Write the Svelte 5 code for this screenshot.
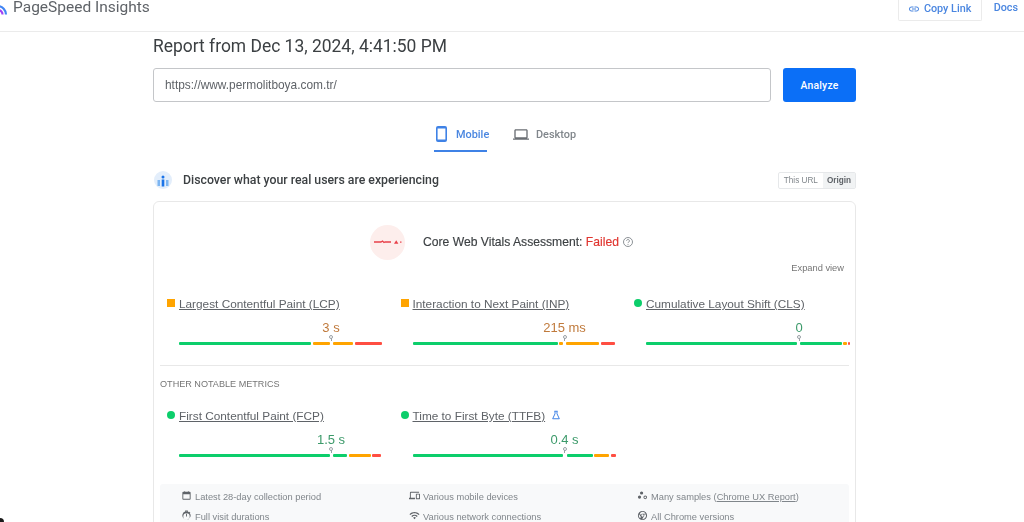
<script>
	const coreMetrics = [
		{
			name: 'Largest Contentful Paint (LCP)', value: '3 s', status: 'average', pin: 152,
			segments: [['good', 132], ['average', 17], ['gap', 3.5], ['average', 20], ['poor', 27]]
		},
		{
			name: 'Interaction to Next Paint (INP)', value: '215 ms', status: 'average', pin: 152,
			segments: [['good', 145], ['average', 3.5], ['gap', 3.5], ['average', 33], ['poor', 14.5]]
		},
		{
			name: 'Cumulative Layout Shift (CLS)', value: '0', status: 'good', pin: 153,
			segments: [['good', 150.5], ['gap', 3.5], ['good', 41.5], ['average', 3.5], ['poor', 2]]
		}
	];

	const otherMetrics = [
		{
			name: 'First Contentful Paint (FCP)', value: '1.5 s', status: 'good', pin: 152,
			segments: [['good', 150.5], ['gap', 3.5], ['good', 14], ['average', 22], ['poor', 9]]
		},
		{
			name: 'Time to First Byte (TTFB)', value: '0.4 s', status: 'good', pin: 152, beta: true,
			segments: [['good', 150], ['gap', 4], ['good', 26], ['average', 15], ['poor', 5]]
		}
	];

	const icons = {
		calendar: 'M5 4h2V2.5h2V4h6V2.5h2V4h2a2 2 0 0 1 2 2v13a2 2 0 0 1-2 2H5a2 2 0 0 1-2-2V6a2 2 0 0 1 2-2zm0 5v10h14V9H5z',
		timer: 'M9 1h6v2H9V1zm2 7h2v6h-2V8zm8-1.6 1.4-1.4L19 3.6l-1.4 1.4A9 9 0 1 0 19 6.4zM12 21a7 7 0 1 1 0-14 7 7 0 0 1 0 14z',
		devices: 'M4 6h18V4H4a2 2 0 0 0-2 2v11H0v3h13v-3H4V6zm19 2h-7a1 1 0 0 0-1 1v10a1 1 0 0 0 1 1h7a1 1 0 0 0 1-1V9a1 1 0 0 0-1-1zm-1 10h-5v-8h5v8z',
		wifi: 'M1 9l2 2c5-5 13-5 18 0l2-2C16.900 3 7.100 3 1 9zm8 8 3 3 3-3a4.200 4.200 0 0 0-6 0zm-4-4 2 2a7 7 0 0 1 10 0l2-2a10 10 0 0 0-14 0z',
		samples: 'M10 3a3.500 3.500 0 1 1 0 7 3.500 3.500 0 0 1 0-7zM5.500 12a3.500 3.500 0 1 1 0 7 3.500 3.500 0 0 1 0-7zM18 12a4 4 0 1 1 0 8 4 4 0 0 1 0-8zm0 2a2 2 0 1 0 0 4 2 2 0 0 0 0-4z',
		chrome: 'M12 2a10 10 0 1 0 0 20 10 10 0 0 0 0-20zm0 2a8 8 0 0 1 6.900 4H12a4 4 0 0 0-3.800 2.800L6.300 7A8 8 0 0 1 12 4zM4 12c0-1 .2-2 .6-2.900L8.500 15.500l-1.800 2.500A8 8 0 0 1 4 12zm8 2.500a2.500 2.500 0 1 1 0-5 2.500 2.500 0 0 1 0 5zm0 5.500h-.6l3-5.400A4 4 0 0 0 16 12c0-.7-.2-1.400-.5-2h4A8 8 0 0 1 12 20z'
	};

	const notes = [
		[
			{ icon: 'calendar', text: 'Latest 28-day collection period' },
			{ icon: 'devices', text: 'Various mobile devices' },
			{ icon: 'samples', text: 'Many samples (', link: 'Chrome UX Report', after: ')' }
		],
		[
			{ icon: 'timer', text: 'Full visit durations' },
			{ icon: 'wifi', text: 'Various network connections' },
			{ icon: 'chrome', text: 'All Chrome versions' }
		]
	];
</script>

{#snippet metric(m)}
	<div class="metric">
		<div class="metric-head">
			<span class="marker {m.status}"></span>
			<a class="metric-name" href="#top">{m.name}</a>
			{#if m.beta}
				<svg class="flask" viewBox="0 0 12 12"><path d="M4 1.500h4M4.800 1.500v3L2 10.500h8l-2.800-6v-3" /></svg>
			{/if}
		</div>
		<div class="metric-value {m.status}"><span style="margin-left: {m.pin}px">{m.value}</span></div>
		<div class="bar">
			{#each m.segments as [kind, width]}
				<span class="seg {kind}" style="width: {width}px"></span>
			{/each}
			<span class="pin" style="left: {m.pin}px"></span>
		</div>
	</div>
{/snippet}

<div class="page">
	<header>
		<div class="brand">
			<svg class="logo" viewBox="0 0 13 16">
				<path d="M-2 6a8.500 8.500 0 0 1 8 8.500" fill="none" stroke="#4285f4" stroke-width="2.200" />
				<path d="M-2 10a4.500 4.500 0 0 1 4.500 4.500" fill="none" stroke="#a142f4" stroke-width="2.200" />
			</svg>
			<span>PageSpeed Insights</span>
		</div>
		<div class="header-actions">
			<button class="copy">
				<svg viewBox="0 0 24 24"><path d="M3.900 12c0-1.710 1.390-3.100 3.100-3.100h4V7H7c-2.760 0-5 2.240-5 5s2.240 5 5 5h4v-1.900H7c-1.710 0-3.100-1.390-3.100-3.100zM8 13h8v-2H8v2zm9-6h-4v1.900h4c1.710 0 3.100 1.390 3.100 3.100s-1.390 3.100-3.100 3.100h-4V17h4c2.760 0 5-2.240 5-5s-2.240-5-5-5z" /></svg>
				Copy Link
			</button>
			<a class="docs" href="#top">Docs</a>
		</div>
	</header>

	<main>
		<h1>Report from Dec 13, 2024, 4:41:50 PM</h1>

		<form class="url-form">
			<input type="text" value="https://www.permolitboya.com.tr/" />
			<button type="button">Analyze</button>
		</form>

		<div class="tabs">
			<div class="tab active">
				<svg class="phone" viewBox="0 0 11 16"><path d="M2 0h7a2 2 0 0 1 2 2v12a2 2 0 0 1-2 2H2a2 2 0 0 1-2-2V2a2 2 0 0 1 2-2zm-.4 2.500v11h7.800v-11H1.600z" /></svg>
				Mobile
			</div>
			<div class="tab">
				<svg class="laptop" viewBox="0 0 24 18"><path d="M20 15c1.100 0 2-.9 2-2V3c0-1.100-.9-2-2-2H4c-1.100 0-2 .9-2 2v10c0 1.100.9 2 2 2H0v2h24v-2h-4zM4 3h16v10H4V3z" /></svg>
				Desktop
			</div>
		</div>

		<div class="field-head">
			<svg class="field-icon" viewBox="0 0 18 18">
				<circle cx="9" cy="9" r="9" fill="#e3eefb" />
				<circle cx="9" cy="6" r="1.500" fill="#1a73e8" />
				<rect x="3.500" y="9" width="2.500" height="6" fill="#7cb5f2" />
				<rect x="7.700" y="8.500" width="2.600" height="7" fill="#1a73e8" />
				<rect x="12" y="9" width="2.500" height="6" fill="#7cb5f2" />
			</svg>
			<h2>Discover what your real users are experiencing</h2>
			<div class="toggle">
				<span>This URL</span>
				<span class="on">Origin</span>
			</div>
		</div>

		<section class="card">
			<div class="assessment">
				<div class="thumb">
					<svg viewBox="0 0 30 6">
						<path d="M1 3h7l1.500-1 1.500 1.500 1-.5h6" fill="none" stroke="#e8404a" stroke-width="1.300" />
						<path d="M21 4.800l2.200-3.600 2.200 3.600z" fill="#e8404a" />
						<rect x="27" y="2.500" width="1.500" height="1.200" fill="#e8404a" />
					</svg>
				</div>
				<p>Core Web Vitals Assessment: <b>Failed</b></p>
				<svg class="help" viewBox="0 0 12 12"><circle cx="6" cy="6" r="4.500" /><path d="M4.600 4.800a1.400 1.400 0 1 1 2.200 1.200c-.5.300-.8.600-.8 1.100M6 8.200v.8" /></svg>
			</div>
			<div class="expand">Expand view</div>

			<div class="metrics">
				{#each coreMetrics as m}
					{@render metric(m)}
				{/each}
			</div>

			<div class="other">
				<h3>OTHER NOTABLE METRICS</h3>
				<div class="metrics">
					{#each otherMetrics as m}
						{@render metric(m)}
					{/each}
				</div>
			</div>

			<div class="notes">
				{#each notes as row}
					{#each row as note}
						<div class="note">
							<svg viewBox="0 0 24 24"><path d={icons[note.icon]} /></svg>
							<span>{note.text}{#if note.link}<a href="#top">{note.link}</a>{note.after}{/if}</span>
						</div>
					{/each}
				{/each}
			</div>
		</section>
	</main>

	<span class="corner"></span>
</div>

<style>
	:global(body) {
		background: #fff;
		overflow: hidden;
	}

	.page {
		position: relative;
		height: 522px;
		overflow: hidden;
		font-family: "Liberation Sans", Arial, sans-serif;
		color: #3c4043;
		filter: blur(0.5px);
	}

	.corner {
		position: absolute;
		left: -4px;
		bottom: -4px;
		width: 8px;
		height: 8px;
		border-radius: 50%;
		background: #1a1a1a;
	}

	header {
		height: 31px;
		border-bottom: 1px solid #ebebeb;
		display: flex;
		justify-content: space-between;
		align-items: flex-start;
	}

	.brand {
		display: flex;
		align-items: flex-start;
		font-family: Roboto, sans-serif;
		font-size: 15.500px;
		line-height: 14px;
		color: #5f6368;
	}

	.logo {
		width: 13px;
		height: 16px;
	}

	.header-actions {
		display: flex;
		align-items: flex-start;
		margin-right: 6px;
	}

	.copy {
		width: 84px;
		height: 21px;
		padding: 0 0 3px;
		border: 1px solid #ebebeb;
		border-top: none;
		border-radius: 0 0 2px 2px;
		background: #fff;
		color: #4a86e0;
		font-family: Roboto, sans-serif;
		font-size: 10.800px;
		font-weight: 500;
		display: flex;
		align-items: center;
		justify-content: center;
		gap: 4px;
	}

	.copy svg {
		width: 12px;
		height: 12px;
		fill: #4a86e0;
	}

	.docs {
		margin: 2px 0 0 12px;
		color: #4a86e0;
		font-family: Roboto, sans-serif;
		font-size: 10.800px;
		font-weight: 500;
		line-height: 12px;
		text-decoration: none;
	}

	main {
		width: 703px;
		margin-left: 153px;
	}

	h1 {
		margin: 4px 0 0;
		font-family: Roboto, sans-serif;
		font-size: 17.450px;
		font-weight: 400;
		line-height: 20px;
		color: #3c4043;
	}

	.url-form {
		display: flex;
		gap: 12px;
		margin-top: 12px;
		height: 34px;
	}

	.url-form input {
		flex: 1;
		min-width: 0;
		box-sizing: border-box;
		padding: 0 11px;
		border: 1px solid #c4c6c9;
		border-radius: 3px;
		font-family: "Liberation Sans", Arial, sans-serif;
		font-size: 11.900px;
		color: #5f6368;
		outline: none;
	}

	.url-form button {
		width: 73px;
		border: none;
		border-radius: 3px;
		background: #0b6ff7;
		color: #fff;
		font-family: Roboto, sans-serif;
		font-size: 10.400px;
		font-weight: 500;
		letter-spacing: 0.2px;
	}

	.tabs {
		display: flex;
		margin: 15px 0 0 281px;
		height: 35px;
		gap: 26px;
		font-family: Roboto, sans-serif;
		font-size: 10.900px;
		font-weight: 500;
		color: #80868b;
	}

	.tab {
		display: flex;
		align-items: flex-start;
		gap: 7px;
		line-height: 35px;
		box-sizing: border-box;
		height: 35px;
	}

	.tab.active {
		width: 53px;
		box-sizing: border-box;
		padding-left: 2px;
		gap: 9px;
		color: #4a86e0;
		border-bottom: 2px solid #3f82e6;
		white-space: nowrap;
	}

	.phone {
		flex: none;
		width: 11px;
		height: 16px;
		margin-top: 9px;
		fill: #3f82e6;
	}

	.laptop {
		flex: none;
		width: 16px;
		height: 13px;
		margin-top: 11px;
		fill: #6a6e73;
	}

	.field-head {
		display: flex;
		align-items: center;
		margin-top: 19px;
		height: 18px;
	}

	.field-icon {
		width: 18px;
		height: 18px;
		margin: 0 11px 0 1px;
	}

	h2 {
		flex: 1;
		margin: 0 0 1px;
		font-family: Roboto, sans-serif;
		font-size: 12.300px;
		font-weight: 500;
		color: #3c4043;
	}

	.toggle {
		display: flex;
		height: 17px;
		border: 1px solid #e6e8ea;
		box-sizing: border-box;
		border-radius: 2px;
		font-size: 8.200px;
		line-height: 15px;
		color: #80868b;
	}

	.toggle span {
		padding: 0 5px;
	}

	.toggle .on {
		background: #f1f3f4;
		color: #5f6368;
		font-weight: 700;
		padding: 0 4px;
	}

	.card {
		box-sizing: border-box;
		height: 330px;
		margin-top: 12px;
		padding: 0 6px;
		border: 1px solid #e8e8e8;
		border-radius: 6px;
	}

	.assessment {
		display: flex;
		align-items: center;
		margin: 22px 0 0 210px;
		height: 36px;
	}

	.thumb {
		width: 35px;
		height: 35px;
		border-radius: 50%;
		background: #fdeeec;
		display: flex;
		align-items: center;
		justify-content: center;
		margin-right: 18px;
	}

	.thumb svg {
		width: 30px;
		height: 6px;
	}

	.assessment p {
		margin: 0;
		font-size: 12.150px;
		color: #3c4043;
		-webkit-text-stroke: 0.15px #3c4043;
	}

	.assessment b {
		font-weight: 400;
		color: #e0352f;
		-webkit-text-stroke: 0.15px #e0352f;
	}

	.help {
		width: 12px;
		height: 12px;
		margin-left: 3px;
		fill: none;
		stroke: #80868b;
		stroke-width: 0.900;
	}

	.expand {
		margin: 2px 5px 0 0;
		text-align: right;
		font-size: 9.300px;
		line-height: 12px;
		color: #757575;
	}

	.metrics {
		display: grid;
		grid-template-columns: 233.500px 233.500px 1fr;
		margin-top: 23px;
	}

	.metric {
		padding-left: 7px;
	}

	.metric-head {
		display: flex;
		align-items: center;
		height: 14px;
		font-size: 11.800px;
	}

	.marker {
		width: 8px;
		height: 8px;
		margin-right: 4px;
		margin-bottom: 2px;
		background: #ffa400;
	}

	.marker.good {
		border-radius: 50%;
		background: #0cce6b;
	}

	.metric-name {
		color: #5f6368;
		text-decoration: underline;
		white-space: nowrap;
	}

	.flask {
		width: 10px;
		height: 10px;
		margin: 0 0 3px 6px;
		fill: none;
		stroke: #3f82e6;
		stroke-width: 1.200;
	}

	.metric-value {
		margin: 9px 0 0 12px;
		height: 15px;
		font-size: 13px;
		line-height: 15px;
		white-space: nowrap;
		color: #0d8a4a;
	}

	.metric-value span {
		display: inline-block;
		transform: translateX(-50%);
	}

	.metric-value.average {
		color: #c07a3c;
	}

	.metric-value.good {
		color: #3c9a6a;
	}

	.bar {
		position: relative;
		display: flex;
		gap: 1.500px;
		margin: 7px 0 0 12px;
		height: 3px;
	}

	.seg {
		display: block;
		flex: none;
		height: 3px;
		border-radius: 1px;
	}

	.seg.good {
		background: #0cce6b;
	}

	.seg.average {
		background: #ffa400;
	}

	.seg.poor {
		background: #ff4e42;
	}

	.seg.gap {
		background: transparent;
		margin: 0 -1.500px;
	}

	.pin {
		position: absolute;
		top: -7px;
		width: 2px;
		height: 2px;
		border: 1px solid #9aa0a6;
		border-radius: 50%;
		transform: translateX(-2px);
		background: #fff;
	}

	.pin::after {
		content: '';
		position: absolute;
		left: 0.500px;
		top: 2px;
		width: 1px;
		height: 3px;
		background: #9aa0a6;
	}

	.other {
		margin-top: 20px;
		border-top: 1px solid #e8e8e8;
		padding-top: 13px;
	}

	h3 {
		margin: 0;
		font-size: 9.100px;
		font-weight: 400;
		line-height: 11px;
		color: #757575;
	}

	.other .metrics {
		margin-top: 19px;
	}

	.notes {
		display: grid;
		grid-template-columns: 228px 228px 1fr;
		align-content: start;
		row-gap: 5px;
		margin-top: 27px;
		padding: 5px 0 0 21px;
		background: #f8f9fa;
		height: 60px;
		box-sizing: border-box;
		border-radius: 3px;
	}

	.note {
		display: flex;
		align-items: center;
		gap: 3px;
		height: 15px;
		font-size: 9.300px;
		color: #80868b;
		white-space: nowrap;
	}

	.note svg {
		width: 11px;
		height: 11px;
		margin-top: -3px;
		fill: #5f6368;
	}

	.note a {
		color: #80868b;
		text-decoration: underline;
	}
</style>
